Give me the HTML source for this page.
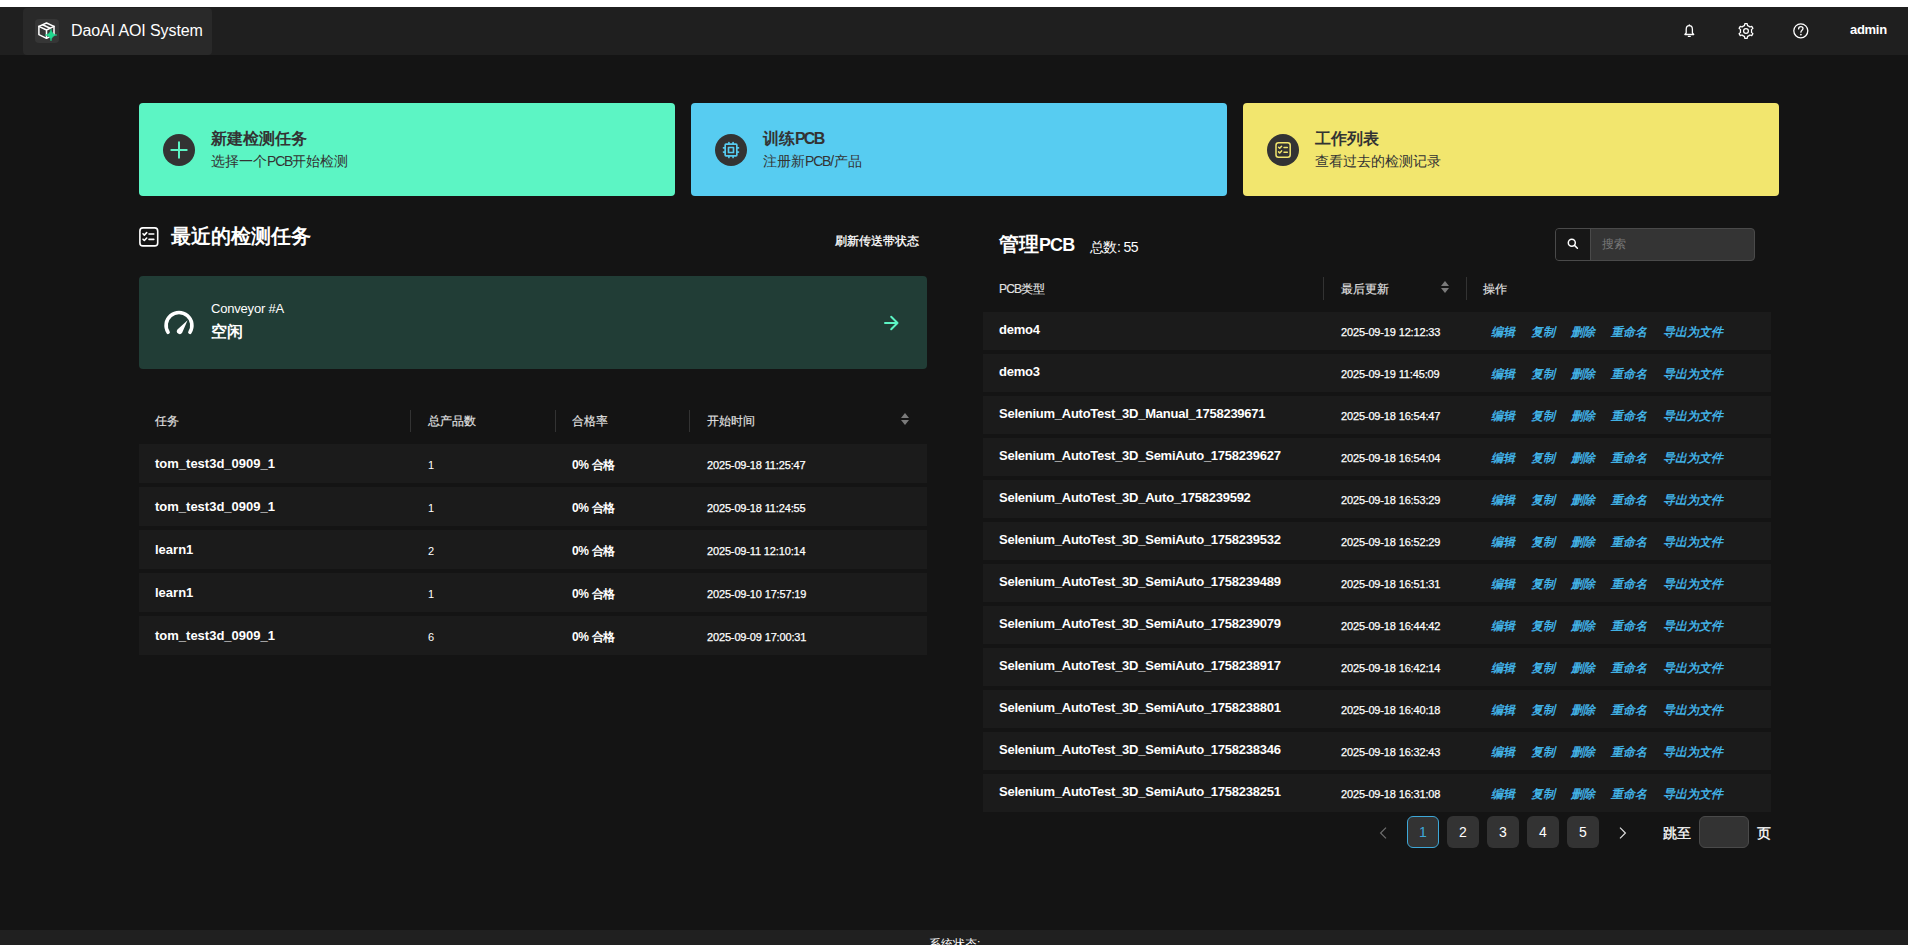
<!DOCTYPE html>
<html><head><meta charset="utf-8">
<style>
*{box-sizing:border-box;margin:0;padding:0}
html,body{width:1908px;height:945px;overflow:hidden;background:#141414;font-family:"Liberation Sans",sans-serif;color:#fff}
.a{position:absolute;white-space:nowrap}
#top{left:0;top:0;width:1908px;height:7px;background:#fff}
#hdr{left:0;top:7px;width:1908px;height:48px;background:#1f1f1f}
#logo{left:23px;top:8px;width:189px;height:47px;background:#292929;border-radius:4px}
#logoic{left:35px;top:19px;width:24px;height:24px;background:#363636;border-radius:4px}
.card{top:103px;width:536px;height:93px;border-radius:4px}
.cic{left:24px;top:31px;width:32px;height:32px;border-radius:50%;background:#333}
.ct{left:72px;top:26px;font-size:16px;font-weight:bold;color:#333;line-height:20px}
.cs{left:72px;top:48px;font-size:14px;color:#333;line-height:20px}
.row{height:39px;background:#1b1b1b}
.prow{height:38px;background:#1b1b1b;left:983px;width:788px}
.th{font-size:12px;color:#e2e2e2;line-height:16px;-webkit-text-stroke:0.15px #e2e2e2}
.sep{width:1px;background:#333}
.nm{font-size:13px;font-weight:bold;line-height:16px}
.dt{font-size:11px;line-height:14px;letter-spacing:-0.15px;-webkit-text-stroke:0.25px #fff}
.cnt{font-size:11px;line-height:14px}
.pr{font-size:12px;font-weight:bold;line-height:16px;letter-spacing:-0.3px}
.pn{letter-spacing:-0.25px}
.lk{font-size:12px;font-style:italic;color:#45bdf2;line-height:16px;-webkit-text-stroke:0.35px #45bdf2}
.pg{top:816px;width:32px;height:32px;border-radius:6px;background:#333;font-size:14px;line-height:32px;text-align:center;color:#fff}
</style></head><body>
<div id="top" class="a"></div>
<div id="hdr" class="a"></div>
<div id="logo" class="a"></div>
<div id="logoic" class="a"></div>
<div class="a" style="left:71px;top:21px;font-size:16px;line-height:20px;color:#fff;letter-spacing:-0.1px">DaoAI AOI System</div>
<div class="a" style="left:1850px;top:22px;font-size:13px;font-weight:bold;line-height:16px;letter-spacing:-0.3px">admin</div>

<!-- cards -->
<div class="a card" style="left:139px;background:#5cf5c4">
  <div class="a cic"></div>
  <div class="a ct">新建检测任务</div>
  <div class="a cs">选择一个<span style="letter-spacing:-1.2px">PCB</span>开始检测</div>
</div>
<div class="a card" style="left:691px;background:#57ccf1">
  <div class="a cic"></div>
  <div class="a ct">训练<span style="letter-spacing:-1.8px">PCB</span></div>
  <div class="a cs">注册新<span style="letter-spacing:-1.2px">PCB</span>/产品</div>
</div>
<div class="a card" style="left:1243px;background:#f2e66e">
  <div class="a cic"></div>
  <div class="a ct">工作列表</div>
  <div class="a cs">查看过去的检测记录</div>
</div>

<!-- left section -->
<div class="a" style="left:171px;top:224px;font-size:20px;font-weight:bold;line-height:24px">最近的检测任务</div>
<div class="a" style="left:835px;top:233px;font-size:12px;line-height:16px;-webkit-text-stroke:0.3px #fff">刷新传送带状态</div>
<div class="a" style="left:139px;top:276px;width:788px;height:93px;background:#213d36;border-radius:4px"></div>
<div class="a" style="left:211px;top:301px;font-size:13px;line-height:16px;letter-spacing:-0.2px">Conveyor #A</div>
<div class="a" style="left:211px;top:322px;font-size:16px;font-weight:bold;line-height:20px">空闲</div>

<div class="a th" style="left:155px;top:413px">任务</div>
<div class="a th" style="left:428px;top:413px">总产品数</div>
<div class="a th" style="left:572px;top:413px">合格率</div>
<div class="a th" style="left:707px;top:413px">开始时间</div>
<div class="a sep" style="left:410px;top:410px;height:22px"></div>
<div class="a sep" style="left:555px;top:410px;height:22px"></div>
<div class="a sep" style="left:689px;top:410px;height:22px"></div>

<div id="ltable">
<div class="a row" style="left:139px;top:444px;width:788px"></div>
<div class="a nm" style="left:155px;top:456px">tom_test3d_0909_1</div>
<div class="a cnt" style="left:428px;top:458px">1</div>
<div class="a pr" style="left:572px;top:457px">0% 合格</div>
<div class="a dt" style="left:707px;top:458px">2025-09-18 11:25:47</div>
<div class="a row" style="left:139px;top:487px;width:788px"></div>
<div class="a nm" style="left:155px;top:499px">tom_test3d_0909_1</div>
<div class="a cnt" style="left:428px;top:501px">1</div>
<div class="a pr" style="left:572px;top:500px">0% 合格</div>
<div class="a dt" style="left:707px;top:501px">2025-09-18 11:24:55</div>
<div class="a row" style="left:139px;top:530px;width:788px"></div>
<div class="a nm" style="left:155px;top:542px">learn1</div>
<div class="a cnt" style="left:428px;top:544px">2</div>
<div class="a pr" style="left:572px;top:543px">0% 合格</div>
<div class="a dt" style="left:707px;top:544px">2025-09-11 12:10:14</div>
<div class="a row" style="left:139px;top:573px;width:788px"></div>
<div class="a nm" style="left:155px;top:585px">learn1</div>
<div class="a cnt" style="left:428px;top:587px">1</div>
<div class="a pr" style="left:572px;top:586px">0% 合格</div>
<div class="a dt" style="left:707px;top:587px">2025-09-10 17:57:19</div>
<div class="a row" style="left:139px;top:616px;width:788px"></div>
<div class="a nm" style="left:155px;top:628px">tom_test3d_0909_1</div>
<div class="a cnt" style="left:428px;top:630px">6</div>
<div class="a pr" style="left:572px;top:629px">0% 合格</div>
<div class="a dt" style="left:707px;top:630px">2025-09-09 17:00:31</div>
</div><!--/lt-->

<!-- right section -->
<div class="a" style="left:999px;top:232px;font-size:20px;font-weight:bold;line-height:24px">管理<span style="font-size:18px;letter-spacing:-0.9px">PCB</span></div>
<div class="a" style="left:1090px;top:238px;font-size:14px;line-height:18px;letter-spacing:-0.55px">总数: 55</div>
<div class="a" style="left:1555px;top:228px;width:200px;height:33px;border:1px solid #4a4a4a;border-radius:4px;background:#343434;overflow:hidden">
  <div class="a" style="left:0;top:0;width:35px;height:31px;background:#171717;border-right:1px solid #4a4a4a"></div>
  <div class="a" style="left:46px;top:7px;font-size:12px;line-height:16px;color:#777">搜索</div>
</div>
<div class="a th" style="left:999px;top:281px"><span style="letter-spacing:-0.8px">PCB</span>类型</div>
<div class="a th" style="left:1341px;top:281px">最后更新</div>
<div class="a th" style="left:1483px;top:281px">操作</div>
<div class="a sep" style="left:1323px;top:277px;height:23px"></div>
<div class="a sep" style="left:1466px;top:277px;height:23px"></div>

<div id="rtable">
<div class="a prow" style="top:312px"></div>
<div class="a nm pn" style="left:999px;top:322px">demo4</div>
<div class="a dt" style="left:1341px;top:325px">2025-09-19 12:12:33</div>
<div class="a lk" style="left:1491px;top:324px">编辑</div>
<div class="a lk" style="left:1531px;top:324px">复制</div>
<div class="a lk" style="left:1571px;top:324px">删除</div>
<div class="a lk" style="left:1611px;top:324px">重命名</div>
<div class="a lk" style="left:1663px;top:324px">导出为文件</div>
<div class="a prow" style="top:354px"></div>
<div class="a nm pn" style="left:999px;top:364px">demo3</div>
<div class="a dt" style="left:1341px;top:367px">2025-09-19 11:45:09</div>
<div class="a lk" style="left:1491px;top:366px">编辑</div>
<div class="a lk" style="left:1531px;top:366px">复制</div>
<div class="a lk" style="left:1571px;top:366px">删除</div>
<div class="a lk" style="left:1611px;top:366px">重命名</div>
<div class="a lk" style="left:1663px;top:366px">导出为文件</div>
<div class="a prow" style="top:396px"></div>
<div class="a nm pn" style="left:999px;top:406px">Selenium_AutoTest_3D_Manual_1758239671</div>
<div class="a dt" style="left:1341px;top:409px">2025-09-18 16:54:47</div>
<div class="a lk" style="left:1491px;top:408px">编辑</div>
<div class="a lk" style="left:1531px;top:408px">复制</div>
<div class="a lk" style="left:1571px;top:408px">删除</div>
<div class="a lk" style="left:1611px;top:408px">重命名</div>
<div class="a lk" style="left:1663px;top:408px">导出为文件</div>
<div class="a prow" style="top:438px"></div>
<div class="a nm pn" style="left:999px;top:448px">Selenium_AutoTest_3D_SemiAuto_1758239627</div>
<div class="a dt" style="left:1341px;top:451px">2025-09-18 16:54:04</div>
<div class="a lk" style="left:1491px;top:450px">编辑</div>
<div class="a lk" style="left:1531px;top:450px">复制</div>
<div class="a lk" style="left:1571px;top:450px">删除</div>
<div class="a lk" style="left:1611px;top:450px">重命名</div>
<div class="a lk" style="left:1663px;top:450px">导出为文件</div>
<div class="a prow" style="top:480px"></div>
<div class="a nm pn" style="left:999px;top:490px">Selenium_AutoTest_3D_Auto_1758239592</div>
<div class="a dt" style="left:1341px;top:493px">2025-09-18 16:53:29</div>
<div class="a lk" style="left:1491px;top:492px">编辑</div>
<div class="a lk" style="left:1531px;top:492px">复制</div>
<div class="a lk" style="left:1571px;top:492px">删除</div>
<div class="a lk" style="left:1611px;top:492px">重命名</div>
<div class="a lk" style="left:1663px;top:492px">导出为文件</div>
<div class="a prow" style="top:522px"></div>
<div class="a nm pn" style="left:999px;top:532px">Selenium_AutoTest_3D_SemiAuto_1758239532</div>
<div class="a dt" style="left:1341px;top:535px">2025-09-18 16:52:29</div>
<div class="a lk" style="left:1491px;top:534px">编辑</div>
<div class="a lk" style="left:1531px;top:534px">复制</div>
<div class="a lk" style="left:1571px;top:534px">删除</div>
<div class="a lk" style="left:1611px;top:534px">重命名</div>
<div class="a lk" style="left:1663px;top:534px">导出为文件</div>
<div class="a prow" style="top:564px"></div>
<div class="a nm pn" style="left:999px;top:574px">Selenium_AutoTest_3D_SemiAuto_1758239489</div>
<div class="a dt" style="left:1341px;top:577px">2025-09-18 16:51:31</div>
<div class="a lk" style="left:1491px;top:576px">编辑</div>
<div class="a lk" style="left:1531px;top:576px">复制</div>
<div class="a lk" style="left:1571px;top:576px">删除</div>
<div class="a lk" style="left:1611px;top:576px">重命名</div>
<div class="a lk" style="left:1663px;top:576px">导出为文件</div>
<div class="a prow" style="top:606px"></div>
<div class="a nm pn" style="left:999px;top:616px">Selenium_AutoTest_3D_SemiAuto_1758239079</div>
<div class="a dt" style="left:1341px;top:619px">2025-09-18 16:44:42</div>
<div class="a lk" style="left:1491px;top:618px">编辑</div>
<div class="a lk" style="left:1531px;top:618px">复制</div>
<div class="a lk" style="left:1571px;top:618px">删除</div>
<div class="a lk" style="left:1611px;top:618px">重命名</div>
<div class="a lk" style="left:1663px;top:618px">导出为文件</div>
<div class="a prow" style="top:648px"></div>
<div class="a nm pn" style="left:999px;top:658px">Selenium_AutoTest_3D_SemiAuto_1758238917</div>
<div class="a dt" style="left:1341px;top:661px">2025-09-18 16:42:14</div>
<div class="a lk" style="left:1491px;top:660px">编辑</div>
<div class="a lk" style="left:1531px;top:660px">复制</div>
<div class="a lk" style="left:1571px;top:660px">删除</div>
<div class="a lk" style="left:1611px;top:660px">重命名</div>
<div class="a lk" style="left:1663px;top:660px">导出为文件</div>
<div class="a prow" style="top:690px"></div>
<div class="a nm pn" style="left:999px;top:700px">Selenium_AutoTest_3D_SemiAuto_1758238801</div>
<div class="a dt" style="left:1341px;top:703px">2025-09-18 16:40:18</div>
<div class="a lk" style="left:1491px;top:702px">编辑</div>
<div class="a lk" style="left:1531px;top:702px">复制</div>
<div class="a lk" style="left:1571px;top:702px">删除</div>
<div class="a lk" style="left:1611px;top:702px">重命名</div>
<div class="a lk" style="left:1663px;top:702px">导出为文件</div>
<div class="a prow" style="top:732px"></div>
<div class="a nm pn" style="left:999px;top:742px">Selenium_AutoTest_3D_SemiAuto_1758238346</div>
<div class="a dt" style="left:1341px;top:745px">2025-09-18 16:32:43</div>
<div class="a lk" style="left:1491px;top:744px">编辑</div>
<div class="a lk" style="left:1531px;top:744px">复制</div>
<div class="a lk" style="left:1571px;top:744px">删除</div>
<div class="a lk" style="left:1611px;top:744px">重命名</div>
<div class="a lk" style="left:1663px;top:744px">导出为文件</div>
<div class="a prow" style="top:774px"></div>
<div class="a nm pn" style="left:999px;top:784px">Selenium_AutoTest_3D_SemiAuto_1758238251</div>
<div class="a dt" style="left:1341px;top:787px">2025-09-18 16:31:08</div>
<div class="a lk" style="left:1491px;top:786px">编辑</div>
<div class="a lk" style="left:1531px;top:786px">复制</div>
<div class="a lk" style="left:1571px;top:786px">删除</div>
<div class="a lk" style="left:1611px;top:786px">重命名</div>
<div class="a lk" style="left:1663px;top:786px">导出为文件</div>
</div><!--/rt-->

<!-- pagination -->
<div class="a pg" style="left:1407px;border:1px solid #3ea8d8;color:#3ea8d8;line-height:30px">1</div>
<div class="a pg" style="left:1447px">2</div>
<div class="a pg" style="left:1487px">3</div>
<div class="a pg" style="left:1527px">4</div>
<div class="a pg" style="left:1567px">5</div>
<div class="a" style="left:1663px;top:824px;font-size:14px;line-height:18px;-webkit-text-stroke:0.3px #fff">跳至</div>
<div class="a" style="left:1699px;top:816px;width:50px;height:32px;border:1px solid #4a4a4a;border-radius:6px;background:#333"></div>
<div class="a" style="left:1757px;top:824px;font-size:14px;line-height:18px;-webkit-text-stroke:0.3px #fff">页</div>


<!-- icons -->
<svg class="a" style="left:35px;top:19px" width="24" height="24" viewBox="0 0 24 24">
 <g fill="none" stroke="#fff" stroke-width="1.5" stroke-linejoin="round" stroke-linecap="round">
  <path d="M3.9 7.4L11.5 4L19 7.4V15.6L11.5 19.3L3.9 15.6Z"/>
  <path d="M3.9 7.4L11.5 11L19 7.4M11.5 11V19.3M7.6 5.7L15.2 9.2"/>
 </g>
 <path d="M16 10Q16.6 15.4 22 16Q16.6 16.6 16 22Q15.4 16.6 10 16Q15.4 15.4 16 10Z" fill="#1fd98f" stroke="#1fd98f" stroke-width="0.5" stroke-linejoin="round"/>
</svg>
<svg class="a" style="left:1683px;top:24px" width="12" height="14" viewBox="0 0 12 14">
 <path d="M6.3 1.6C4.1 1.6 3.2 3.4 3.2 5.4V8.9L1.9 10.5H10.7L9.4 8.9V5.4C9.4 3.4 8.5 1.6 6.3 1.6Z" fill="none" stroke="#fff" stroke-width="1.3" stroke-linejoin="round"/>
 <path d="M6.3 0.8V1.6M5.4 12.4H7.2" stroke="#fff" stroke-width="1.3" stroke-linecap="round"/>
</svg>
<svg class="a" style="left:1736px;top:21px" width="20" height="20" viewBox="-10 -10 20 20">
 <path d="M1.54 5.38L1.16 7.31L-1.16 7.31L-1.54 5.38A5.6 5.6 0 0 1 -3.89 4.03L-5.75 4.66L-6.91 2.65L-5.43 1.35A5.6 5.6 0 0 1 -5.43 -1.35L-6.91 -2.65L-5.75 -4.66L-3.89 -4.03A5.6 5.6 0 0 1 -1.54 -5.38L-1.16 -7.31L1.16 -7.31L1.54 -5.38A5.6 5.6 0 0 1 3.89 -4.03L5.75 -4.66L6.91 -2.65L5.43 -1.35A5.6 5.6 0 0 1 5.43 1.35L6.91 2.65L5.75 4.66L3.89 4.03A5.6 5.6 0 0 1 1.54 5.38Z" fill="none" stroke="#fff" stroke-width="1.25" stroke-linejoin="round"/>
 <circle cx="0" cy="0" r="2.4" fill="none" stroke="#fff" stroke-width="1.25"/>
</svg>
<svg class="a" style="left:1791px;top:21px" width="20" height="20" viewBox="0 0 20 20">
 <circle cx="9.8" cy="9.8" r="7" fill="none" stroke="#fff" stroke-width="1.3"/>
 <path d="M7.6 7.9C7.6 6.5 8.6 5.6 9.8 5.6C11 5.6 12 6.4 12 7.6C12 9.1 9.9 9.4 9.9 11.2" fill="none" stroke="#fff" stroke-width="1.3" stroke-linecap="round"/>
 <circle cx="9.9" cy="13.6" r="0.85" fill="#fff"/>
</svg>
<!-- card icons -->
<svg class="a" style="left:163px;top:134px" width="32" height="32" viewBox="0 0 32 32">
 <path d="M16 8.3V23.7M8.3 16H23.7" stroke="#5cf5c4" stroke-width="2" stroke-linecap="round"/>
</svg>
<svg class="a" style="left:715px;top:134px" width="32" height="32" viewBox="0 0 32 32">
 <g transform="translate(6 6) scale(0.8333)" fill="none" stroke="#57ccf1" stroke-width="2" stroke-linecap="round" stroke-linejoin="round">
  <rect x="5" y="5" width="14" height="14" rx="1"/>
  <path d="M9 9h6v6h-6z"/>
  <path d="M3 9.5h2M3 14.5h2M9.5 3v2M14.5 3v2M21 9.5h-2M21 14.5h-2M14.5 21v-2M9.5 21v-2"/>
 </g>
</svg>
<svg class="a" style="left:1267px;top:134px" width="32" height="32" viewBox="0 0 32 32">
 <g fill="none" stroke="#f2e66e" stroke-width="1.5" stroke-linecap="round" stroke-linejoin="round">
  <rect x="9" y="8.8" width="14.2" height="14.4" rx="2.5"/>
  <path d="M11.6 13.2L12.7 14.3L14.6 12.2M11.6 17.9L12.7 19L14.6 16.9M17 13.5H20.3M17 18.2H20.3"/>
 </g>
</svg>
<svg class="a" style="left:139px;top:227px" width="20" height="20" viewBox="0 0 20 20">
 <g fill="none" stroke="#fff" stroke-width="1.6" stroke-linecap="round" stroke-linejoin="round">
  <rect x="0.9" y="0.9" width="17.8" height="18" rx="3"/>
  <path d="M4 6.8L5.3 8.1L7.7 5.6M4 12.2L5.3 13.5L7.7 11M10 7H14.8M10 12.4H14.8"/>
 </g>
</svg>
<!-- gauge -->
<svg class="a" style="left:162px;top:308px" width="34" height="28" viewBox="0 0 34 28">
 <path d="M6.06 24.3A12.9 12.9 0 1 1 27.94 24.3" fill="none" stroke="#fff" stroke-width="3.6" stroke-linecap="round"/>
 <path d="M25.6 12.2L20.16 24.79A2.9 2.9 0 0 1 15.44 21.41Z" fill="#fff"/>
</svg>
<svg class="a" style="left:880px;top:312px" width="22" height="22" viewBox="0 0 22 22">
 <path d="M5 11H17.5M11.2 4.8L17.5 11L11.2 17.2" fill="none" stroke="#5cf5c4" stroke-width="2" stroke-linecap="round" stroke-linejoin="round"/>
</svg>
<!-- sort icons -->
<svg class="a" style="left:900px;top:412px" width="10" height="14" viewBox="0 0 10 14">
 <path d="M5 1L9 6H1Z M1 8H9L5 13Z" fill="#7a7a7a"/>
</svg>
<svg class="a" style="left:1440px;top:280px" width="10" height="14" viewBox="0 0 10 14">
 <path d="M5 1L9 6H1Z M1 8H9L5 13Z" fill="#7a7a7a"/>
</svg>
<!-- search icon -->
<svg class="a" style="left:1565px;top:236px" width="16" height="16" viewBox="0 0 16 16">
 <circle cx="6.8" cy="6.7" r="3.5" fill="none" stroke="#fff" stroke-width="1.5"/>
 <path d="M9.5 9.4L12.4 12.3" stroke="#fff" stroke-width="1.5" stroke-linecap="round"/>
</svg>
<!-- pager arrows -->
<svg class="a" style="left:1377px;top:825px" width="12" height="16" viewBox="0 0 12 16">
 <path d="M9 2.6L3.6 8L9 13.4" fill="none" stroke="#6e6e6e" stroke-width="1.2"/>
</svg>
<svg class="a" style="left:1617px;top:825px" width="12" height="16" viewBox="0 0 12 16">
 <path d="M3 2.6L8.4 8L3 13.4" fill="none" stroke="#e0e0e0" stroke-width="1.2"/>
</svg>

<!-- footer -->
<div class="a" style="left:0;top:930px;width:1908px;height:15px;background:#202020"></div>
<div class="a" style="left:929px;top:936px;font-size:12px;font-weight:500;line-height:16px">系统状态:</div>
</body></html>
